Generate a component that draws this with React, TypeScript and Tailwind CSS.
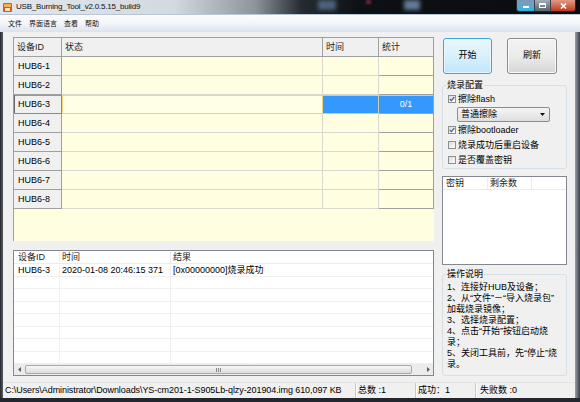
import React from 'react';

const devices = ['HUB6-1', 'HUB6-2', 'HUB6-3', 'HUB6-4', 'HUB6-5', 'HUB6-6', 'HUB6-7', 'HUB6-8'];
const selectedDevice = 'HUB6-3';

const logRows = [
  { id: 'HUB6-3', time: '2020-01-08 20:46:15 371', result: '[0x00000000]烧录成功' },
  null,
  null,
  null,
  null,
  null,
  null,
  null,
];

const helpLines = [
  '1、连接好HUB及设备；',
  '2、从“文件”－“导入烧录包”',
  '加载烧录镜像；',
  '3、选择烧录配置；',
  '4、点击“开始”按钮启动烧',
  '录；',
  '5、关闭工具前，先“停止”烧',
  '录。',
];

function TitleBar() {
  return (
    <div className="relative flex h-[14px] items-start bg-[linear-gradient(90deg,#e2e7ed_0%,#d3d9e0_30%,#8d949c_44%,#262b32_52%,#0d1014_62%,#0a0c10_100%)]">
      {/* glass reflections from the desktop behind */}
      <div className="absolute left-[318px] top-0 h-[10px] w-[18px] bg-[#6d8fb5] opacity-60 blur-[2px]" />
      <div className="absolute left-[366px] top-0 h-[4px] w-[5px] bg-[#a04050] opacity-60 blur-[1px]" />
      <div className="absolute left-[404px] top-0 h-[10px] w-[16px] bg-[#86aad0] opacity-70 blur-[2px]" />
      <svg className="ml-[3px] mt-[3px] shrink-0" width="9" height="9" viewBox="0 0 9 9">
        <rect x="0" y="0" width="9" height="9" rx="1" fill="#d8591c" />
        <rect x="1" y="1" width="7" height="3" fill="#f6b04a" />
        <rect x="2" y="5" width="5" height="3" fill="#fbe3c4" />
      </svg>
      <span className="ml-[4px] mt-[2px] text-[8px] leading-[10px] tracking-[-0.2px] text-[#101010]">
        USB_Burning_Tool_v2.0.5.15_build9
      </span>
      <div className="relative ml-auto mr-[4px] flex h-[12px] overflow-hidden rounded-b-[3px] border border-t-0 border-[#262b33]">
        <div className="flex w-[17px] items-end justify-center bg-linear-to-b from-[#7e98b4] to-[#25b3e4] pb-[3px]">
          <div className="h-[2px] w-[6px] bg-white" />
        </div>
        <div className="flex w-[16px] items-center justify-center border-l border-[#3a4048] bg-linear-to-b from-[#a4adb6] to-[#5a646e]">
          <div className="h-[5px] w-[7px] border border-t-2 border-white" />
        </div>
        <div className="flex w-[25px] items-center justify-center border-l border-[#3a4048] bg-linear-to-b from-[#e09a86] to-[#c0341c]">
          <svg width="7" height="6" viewBox="0 0 7 6">
            <path d="M1 0.5 L6 5.5 M6 0.5 L1 5.5" stroke="#fff" strokeWidth="1.6" />
          </svg>
        </div>
      </div>
    </div>
  );
}

function MenuBar() {
  return (
    <div className="flex h-[18px] items-start gap-[7px] border-t border-[#b9c6d6] bg-linear-to-b from-[#fbfcfd] via-[#f3f5f8] to-[#dbe2ee] pl-[8px] pt-[4px] text-[7px] leading-[9px] text-[#111]">
      <span>文件</span>
      <span>界面语言</span>
      <span>查看</span>
      <span>帮助</span>
    </div>
  );
}

function DeviceGrid() {
  return (
    <div className="h-[204px] w-[421px] border-l border-t border-[#a0a0a0] bg-[#fffee1]">
      <div className="flex h-[19px] bg-[#f0f0f0] leading-[18px] text-[#1e1e1e]">
        <div className="w-[48px] border-b border-r border-[#a0a0a0] pl-[3px]">设备ID</div>
        <div className="w-[261px] border-b border-r border-[#a0a0a0] pl-[3px]">状态</div>
        <div className="w-[56px] border-b border-r border-[#a0a0a0] pl-[3px]">时间</div>
        <div className="w-[55px] border-b border-r border-[#a0a0a0] pl-[3px]">统计</div>
      </div>
      {devices.map((id) =>
        id === selectedDevice ? (
          <div key={id} className="flex h-[19px] leading-[18px]">
            <div className="w-[48px] border-b border-r border-[#8a8a8a] bg-[#f0f0f0] pl-[4px] shadow-[inset_1px_0_0_#6a6a6a,inset_0_1px_0_#9a9a9a]">
              {id}
            </div>
            <div className="w-[261px] border-b border-r border-[#ecd57e] bg-[#fffee6] shadow-[inset_1px_0_0_#f0d87e,inset_0_1px_0_#f0d87e]" />
            <div className="w-[56px] border-b border-r border-[#d2cc9a] bg-[#3399ff] shadow-[inset_0_1px_0_#d8cf8a]" />
            <div className="w-[55px] border-b border-r border-[#a0a0a0] bg-[#3399ff] text-center text-white shadow-[inset_0_1px_0_#d8cf8a]">
              0/1
            </div>
          </div>
        ) : (
          <div key={id} className="flex h-[19px] leading-[18px]">
            <div className="w-[48px] border-b border-r border-[#a0a0a0] bg-[#f0f0f0] pl-[4px]">{id}</div>
            <div className="w-[261px] border-b border-r border-[#d8d8cc]" />
            <div className="w-[56px] border-b border-r border-[#d8d8cc]" />
            <div className="w-[55px] border-b border-r border-[#a0a0a0]" />
          </div>
        ),
      )}
    </div>
  );
}

function ScrollArrow({ dir }: { dir: 'left' | 'right' }) {
  return (
    <div className="flex w-[10px] items-center justify-center">
      <svg width="3" height="5" viewBox="0 0 3 5">
        <path d={dir === 'left' ? 'M3 0 L0 2.5 L3 5 Z' : 'M0 0 L3 2.5 L0 5 Z'} fill="#5c5c5c" />
      </svg>
    </div>
  );
}

function LogList() {
  return (
    <div className="mt-[9px] flex h-[126px] w-[421px] flex-col border border-[#828790] bg-white">
      <div className="flex h-[13px] border-b border-[#ececec] leading-[12px] text-[#1e1e1e]">
        <div className="w-[46px] border-r border-[#ececec] pl-[4px]">设备ID</div>
        <div className="w-[111px] border-r border-[#ececec] pl-[2px]">时间</div>
        <div className="flex-1 pl-[2px]">结果</div>
      </div>
      {logRows.map((row, i) => (
        <div key={i} className="flex h-[12.5px] border-b border-[#f0f0f0] leading-[12px]">
          <div className="w-[46px] border-r border-[#f0f0f0] pl-[4px]">{row?.id}</div>
          <div className="w-[111px] border-r border-[#f0f0f0] pl-[2px]">{row?.time}</div>
          <div className="flex-1 pl-[2px]">{row?.result}</div>
        </div>
      ))}
      <div className="mt-auto flex h-[11px] bg-[#ebebeb]">
        <ScrollArrow dir="left" />
        <div className="my-[1px] ml-[1px] flex w-[387px] items-center justify-center gap-[1px] rounded-[2px] border border-[#a9a9a9] bg-linear-to-b from-[#f6f6f6] to-[#dcdcdc]">
          <div className="h-[4px] w-px bg-[#8a8a8a]" />
          <div className="h-[4px] w-px bg-[#8a8a8a]" />
          <div className="h-[4px] w-px bg-[#8a8a8a]" />
        </div>
        <div className="flex-1" />
        <ScrollArrow dir="right" />
      </div>
    </div>
  );
}

function Check({ checked, label }: { checked?: boolean; label: string }) {
  return (
    <div className="flex h-[12px] items-center gap-[2px]">
      <span className="flex h-[8px] w-[8px] items-center justify-center border border-[#8e8f8f] bg-linear-to-br from-[#dadada] to-white">
        {checked && (
          <svg width="6" height="6" viewBox="0 0 6 6">
            <path d="M0.8 3 L2.4 4.6 L5.3 1" stroke="#4a5f8f" strokeWidth="1.2" fill="none" />
          </svg>
        )}
      </span>
      <span className="leading-[12px]">{label}</span>
    </div>
  );
}

function SidePanel() {
  return (
    <div className="ml-[8px] flex w-[125px] flex-col">
      <div className="ml-[1px] mt-[1px] flex gap-[15px]">
        <button className="flex h-[36px] w-[49px] items-center justify-center rounded-[3px] border border-[#3aa7e0] bg-linear-to-b from-[#eaf6fd] via-[#d9f0fc] to-[#bee6fd] shadow-[inset_0_0_0_1px_#e8f7ff]">
          开始
        </button>
        <button className="flex h-[36px] w-[50px] items-center justify-center rounded-[3px] border border-[#8a8a8a] bg-linear-to-b from-[#f3f3f3] via-[#ebebeb] to-[#d6d6d6] shadow-[inset_0_0_0_1px_#fafafa]">
          刷新
        </button>
      </div>

      <fieldset className="mt-[5px] rounded-[3px] border border-[#d5dfe5] px-[2px] pb-[2px]">
        <legend className="ml-[1px] px-[1px] leading-[13px]">烧录配置</legend>
        <div className="pl-[3px] pt-[1px]">
          <Check checked label="擦除flash" />
          <div className="ml-[9px] mt-[2px] flex h-[15px] w-[93px] items-center justify-between rounded-[2px] border border-[#8c8c8c] bg-linear-to-b from-[#f5f5f5] to-[#dfdfdf] pl-[3px] pr-[4px] leading-[13px]">
            <span>普通擦除</span>
            <svg width="5" height="3" viewBox="0 0 5 3">
              <path d="M0 0 L5 0 L2.5 3 Z" fill="#111" />
            </svg>
          </div>
          <div className="mt-[2px]">
            <Check checked label="擦除bootloader" />
          </div>
          <div className="mt-[3px]">
            <Check label="烧录成功后重启设备" />
          </div>
          <div className="mt-[3px]">
            <Check label="是否覆盖密钥" />
          </div>
        </div>
      </fieldset>

      <div className="mt-[7px] h-[89px] border border-[#828790] bg-white">
        <div className="flex h-[13px] border-b border-[#ececec] leading-[12px] text-[#1e1e1e]">
          <div className="w-[45px] border-r border-[#ececec] pl-[3px]">密钥</div>
          <div className="w-[44px] border-r border-[#ececec] pl-[2px]">剩余数</div>
          <div className="flex-1" />
        </div>
      </div>

      <fieldset className="mt-[3px] h-[108px] rounded-[3px] border border-[#d5dfe5] px-[2px]">
        <legend className="ml-[1px] px-[1px] leading-[13px]">操作说明</legend>
        <div className="pl-[2px] pt-[1px] leading-[11px]">
          {helpLines.map((line, i) => (
            <div key={i} className="whitespace-nowrap">
              {line}
            </div>
          ))}
        </div>
      </fieldset>
    </div>
  );
}

function StatusBar() {
  return (
    <div className="flex h-[16px] items-center border-t border-[#e2e2e2] bg-[#f0f0f0] leading-[15px]">
      <div className="w-[352px] whitespace-nowrap pl-[2px] tracking-[-0.08px]">
        C:\Users\Administrator\Downloads\YS-cm201-1-S905Lb-qlzy-201904.img 610,097 KB
      </div>
      <div className="h-full w-[60px] border-l border-[#c8c8c8] pl-[2px] shadow-[inset_1px_0_0_#fff]">总数 :1</div>
      <div className="h-full w-[60px] border-l border-[#c8c8c8] pl-[2px] shadow-[inset_1px_0_0_#fff]">成功：1</div>
      <div className="h-full flex-1 border-l border-[#c8c8c8] pl-[4px] shadow-[inset_1px_0_0_#fff]">失败数 :0</div>
    </div>
  );
}

export default function App() {
  return (
    <div className="flex h-[402px] w-[580px] flex-col overflow-hidden bg-[#1c2026] font-['Liberation_Sans','Noto_Sans_CJK_SC',sans-serif] text-[9px] text-black">
      <TitleBar />
      <MenuBar />
      <div className="flex flex-1">
        <div className="w-[3px] bg-linear-to-r from-[#24282e] to-[#5a5f66]" />
        <div className="flex flex-1 flex-col bg-[#f0f0f0]">
          <div className="flex flex-1 pl-[10px] pt-[5px]">
            <div className="flex flex-col">
              <DeviceGrid />
              <LogList />
            </div>
            <SidePanel />
          </div>
          <StatusBar />
        </div>
        <div className="w-[5px] bg-linear-to-r from-[#9aa0a7] to-[#3c4148]" />
      </div>
      <div className="h-[4px] bg-[#23272d]" />
    </div>
  );
}
